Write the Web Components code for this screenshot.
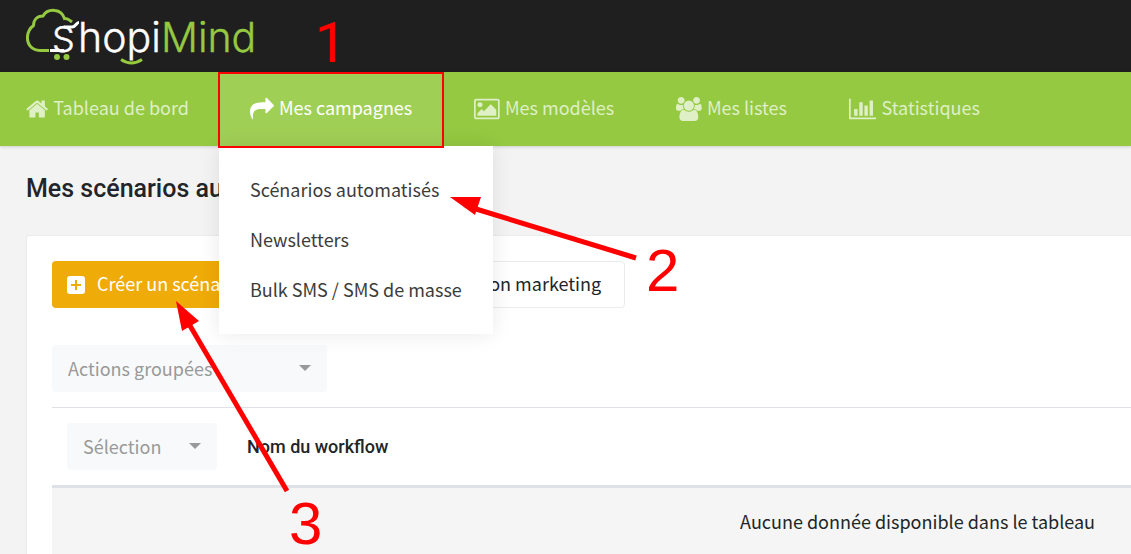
<!DOCTYPE html>
<html lang="fr">
<head>
<meta charset="utf-8">
<meta name="viewport" content="width=device-width, initial-scale=1">
<title>ShopiMind – Mes scénarios automatisés</title>
<style>
  body {
    margin: 0;
    background: #f3f3f3;
    color: #212529;
    font: 18px/24px "Noto Sans CJK SC", "Noto Sans", sans-serif;
  }
</style>
</head>
<body>
<shopi-app></shopi-app>
<script>
const define = (name, html, setup) => {
  const template = document.createElement('template');
  template.innerHTML = html;
  customElements.define(name, class extends HTMLElement {
    constructor() {
      super();
      this.attachShadow({ mode: 'open' }).append(template.content.cloneNode(true));
    }
    connectedCallback() {
      if (setup) setup(this, this.shadowRoot);
    }
  });
};

const icons = {
  home: [1664, 'M1408 992v480q0 26-19 45t-45 19h-384v-384h-256v384h-384q-26 0-45-19t-19-45v-480q0-1 .5-3t.5-3l575-474 575 474q1 2 1 6zm223-69l-62 74q-8 9-21 11h-3q-13 0-21-7l-692-577-692 577q-12 8-24 7-13-2-21-11l-62-74q-8-10-7-23.5t11-21.5l719-599q32-26 76-26t76 26l244 204v-195q0-14 9-23t23-9h192q14 0 23 9t9 23v408l219 182q10 8 11 21.5t-7 23.5z'],
  share: [1792, 'M1792 640q0 26-19 45l-512 512q-19 19-45 19t-45-19-19-45v-256h-224q-98 0-175.5 6t-154 21.5-133 42.5-105.5 69.5-80 101-48.5 138.5-17.5 181q0 55 5 123 0 6 2.5 23.5t2.5 26.5q0 15-8.5 25t-23.5 10q-16 0-28-17-7-9-13-22t-13.5-30-10.5-24q-127-285-127-451 0-199 53-333 162-403 875-403h224v-256q0-26 19-45t45-19 45 19l512 512q19 19 19 45z'],
  picture: [1920, 'M640 576q0 80-56 136t-136 56-136-56-56-136 56-136 136-56 136 56 56 136zm1024 384v448h-1408v-192l320-320 160 160 512-512zm96-704h-1600q-13 0-22.5 9.5t-9.5 22.5v1216q0 13 9.5 22.5t22.5 9.5h1600q13 0 22.5-9.5t9.5-22.5v-1216q0-13-9.5-22.5t-22.5-9.5zm160 32v1216q0 66-47 113t-113 47h-1600q-66 0-113-47t-47-113v-1216q0-66 47-113t113-47h1600q66 0 113 47t47 113z'],
  users: [1920, 'M593 896q-162 5-265 128h-134q-82 0-138-40.5t-56-118.5q0-353 124-353 6 0 43.5 21t97.5 42.5 119 21.5q67 0 133-23-5 37-5 66 0 139 81 256zm1071 637q0 120-73 189.5t-194 69.5h-874q-121 0-194-69.5t-73-189.5q0-53 3.5-103.5t14-109 26.5-108.5 43-97.5 62-81 85.5-53.5 111.5-20q10 0 43 21.5t73 48 107 48 135 21.5 135-21.5 107-48 73-48 43-21.5q61 0 111.5 20t85.5 53.5 62 81 43 97.5 26.5 108.5 14 109 3.5 103.5zm-1024-1277q0 106-75 181t-181 75-181-75-75-181 75-181 181-75 181 75 75 181zm704 384q0 159-112.5 271.5t-271.5 112.5-271.5-112.5-112.5-271.5 112.5-271.5 271.5-112.5 271.5 112.5 112.5 271.5zm576 225q0 78-56 118.5t-138 40.5h-134q-103-123-265-128 81-117 81-256 0-29-5-66 66 23 133 23 59 0 119-21.5t97.5-42.5 43.5-21q124 0 124 353zm-128-609q0 106-75 181t-181 75-181-75-75-181 75-181 181-75 181 75 75 181z'],
  chart: [2048, 'M640 896v512h-256v-512h256zm384-512v1024h-256v-1024h256zm1024 1152v128h-2048v-1536h128v1408h1920zm-640-896v768h-256v-768h256zm384-384v1152h-256v-1152h256z']
};

define('shopi-icon', `
  <style>
    :host { display: inline-flex; flex: none; }
    svg { display: block; height: 24px; fill: currentColor; }
  </style>
  <svg aria-hidden="true"><path/></svg>`,
  (host, root) => {
    const [width, path] = icons[host.getAttribute('name')];
    root.querySelector('svg').setAttribute('viewBox', `0 0 ${width} 1792`);
    root.querySelector('path').setAttribute('d', path);
  });

define('shopi-logo', `
  <style>
    :host { display: block; }
    a { display: block; width: 232px; }
    svg { display: block; font: 300 41px Inter, sans-serif; }
    .initial { font-size: 36px; }
  </style>
  <a href="#accueil" aria-label="ShopiMind">
    <svg width="232" height="72" viewBox="24 0 232 72" fill="none">
      <g stroke="#94c941" stroke-width="3">
        <path d="M49 50.500H40C31 50 27 44 27.500 36.500C28 31 30 28 33.500 25.500C33.500 20 37 16 43 16C46 11 51 10 55 10.500C60 11 63 14 64.500 18.500C67 18 69 19.500 72 22"/>
        <path d="M121 59.500Q131.500 66.500 142 59.500"/>
      </g>
      <circle cx="57" cy="57" r="3" fill="#94c941"/>
      <circle cx="66.500" cy="57" r="3" fill="#94c941"/>
      <path d="M79 22.500C76 22.500 76 27 72 27H64M50 50.500H64" stroke="#fff" stroke-width="3"/>
      <g stroke-width=".4">
        <text class="initial" x="52" y="52" fill="#fff" stroke="#fff">S</text>
        <text x="78" y="52" fill="#fff" stroke="#fff">hopi</text>
        <text x="161" y="52" fill="#94c941" stroke="#94c941">Mind</text>
      </g>
    </svg>
  </a>`);

define('nav-item', `
  <style>
    :host { display: block; position: relative; }
    a {
      display: flex; align-items: center; gap: 5px; height: 74px;
      padding: 0 31px; color: #dfefc6;
      white-space: nowrap; text-decoration: none;
    }
    span { padding-bottom: 4px; }
    :host([first]) a { padding: 0 30px 0 0; }
    :host([active]) a { color: #fff; background: #a0cf56; }
    :host([active])::after {
      content: ""; position: absolute; z-index: 3; inset: 0 -1px -2px;
      border: 2px solid #f00; pointer-events: none;
    }
  </style>
  <a href="#"><span><slot></slot></span></a>
  <slot name="panel"></slot>`,
  (host, root) => {
    const icon = document.createElement('shopi-icon');
    icon.setAttribute('name', host.getAttribute('icon'));
    root.querySelector('a').prepend(icon);
  });

define('menu-panel', `
  <style>
    :host {
      display: block; position: absolute; z-index: 2; top: 100%; left: 0;
      padding: 19px 0; background: #fff; box-shadow: 0 0 20px rgba(0,0,0,.09);
    }
    ::slotted(a) {
      display: block; padding: 12px 31px 14px; color: #3c3c3c;
      white-space: nowrap; text-decoration: none;
    }
  </style>
  <slot></slot>`);

define('site-header', `
  <style>
    :host { display: block; }
    .brand { padding: 0 24px; background: #1f1f1f; }
    nav {
      display: flex; padding-left: 26px; background: #94c941;
      box-shadow: 0 1px 3px rgba(0,0,0,.15);
    }
  </style>
  <div class="brand"><shopi-logo></shopi-logo></div>
  <nav aria-label="Navigation principale">
    <nav-item icon="home" first>Tableau de bord</nav-item>
    <nav-item icon="share" active>Mes campagnes
      <menu-panel slot="panel">
        <a href="#scenarios">Scénarios automatisés</a>
        <a href="#newsletters">Newsletters</a>
        <a href="#sms">Bulk SMS / SMS de masse</a>
      </menu-panel>
    </nav-item>
    <nav-item icon="picture">Mes modèles</nav-item>
    <nav-item icon="users">Mes listes</nav-item>
    <nav-item icon="chart">Statistiques</nav-item>
  </nav>`);

define('action-button', `
  <style>
    :host { display: block; }
    button {
      display: flex; align-items: center; gap: 12px; height: 47px; padding: 0 23px;
      border: 1px solid #ebebeb; border-radius: 4px; background: #fff;
      color: inherit; font: inherit; white-space: nowrap;
    }
    span { padding-bottom: 4px; }
    :host([primary]) button { padding: 0 15px; border: 0; background: #efab08; color: #fff; }
  </style>
  <button type="button"><slot name="icon"></slot><span><slot></slot></span></button>`);

define('pick-list', `
  <style>
    :host { display: block; position: relative; }
    select {
      display: block; width: 100%; height: 47px; padding: 0 16px 2px; border: 0; border-radius: 4px;
      background: #f8f9fb; color: #999; font: inherit; appearance: none;
    }
    svg { position: absolute; right: 16px; top: 20px; pointer-events: none; }
  </style>
  <select><option></option></select>
  <svg width="12" height="6" aria-hidden="true"><path d="M0 0h12l-6 6z" fill="#999"/></svg>`,
  (host, root) => {
    root.querySelector('select').setAttribute('aria-label', host.getAttribute('label'));
    root.querySelector('option').textContent = host.getAttribute('label');
  });

define('workflow-table', `
  <style>
    :host { display: block; }
    table { width: 100%; border-collapse: collapse; border-top: 1px solid #dee2e6; }
    th {
      padding: 15px; border-bottom: 3px solid #dee2e6;
      font: 500 18px/24px Roboto, sans-serif; text-align: left;
    }
    th:first-child { width: 150px; font: inherit; font-weight: 400; }
    td { height: 65px; padding: 0 36px 2px; background: #f5f5f5; text-align: right; }
  </style>
  <table>
    <thead><tr>
      <th scope="col"><pick-list label="Sélection"></pick-list></th>
      <th scope="col">Nom du workflow</th>
    </tr></thead>
    <tbody><tr><td colspan="2">Aucune donnée disponible dans le tableau</td></tr></tbody>
  </table>`);

define('scenario-card', `
  <style>
    :host {
      display: block; padding: 25px 0 0 25px; background: #fff;
      border: 1px solid #ebebeb; border-width: 1px 0 0 1px; border-top-left-radius: 4px;
    }
    .actions { display: flex; gap: 18px; }
    .bulk { width: 275px; padding: 37px 0 15px; }
  </style>
  <div class="actions">
    <action-button primary>
      <svg slot="icon" width="18" height="18" viewBox="0 0 18 18" aria-hidden="true">
        <rect width="18" height="18" rx="3" fill="#fff"/>
        <path d="M9 4v10M4 9h10" stroke="#efab08" stroke-width="2"/>
      </svg>Créer un scénario automatisé
    </action-button>
    <action-button>L'automation marketing</action-button>
  </div>
  <div class="bulk"><pick-list label="Actions groupées"></pick-list></div>
  <workflow-table></workflow-table>`);

define('step-markers', `
  <style>
    :host { display: block; position: absolute; z-index: 3; top: 0; left: 0; pointer-events: none; }
    svg { display: block; font: 60px "Liberation Sans", Arial, sans-serif; }
    .one { font: 56px Roboto, sans-serif; }
  </style>
  <svg width="700" height="554" fill="#f00">
    <path d="M636 258L476 209" stroke="#f00" stroke-width="5"/>
    <path d="M450 197L481 197L475 215z"/>
    <path d="M287 491L189 324" stroke="#f00" stroke-width="5"/>
    <path d="M176 301L199 321L182 331z"/>
    <text class="one" x="315" y="62">1</text>
    <text x="646" y="291">2</text>
    <text x="289" y="544">3</text>
  </svg>`);

define('shopi-app', `
  <style>
    :host { display: block; position: relative; min-height: 100vh; overflow: hidden; }
    main { padding: 28px 0 0 26px; }
    h1 { margin: 0 0 31px; font: 500 25px/30px Roboto, sans-serif; }
  </style>
  <site-header></site-header>
  <main>
    <h1>Mes scénarios automatisés</h1>
    <scenario-card></scenario-card>
  </main>
  <step-markers></step-markers>`);
</script>
</body>
</html>
